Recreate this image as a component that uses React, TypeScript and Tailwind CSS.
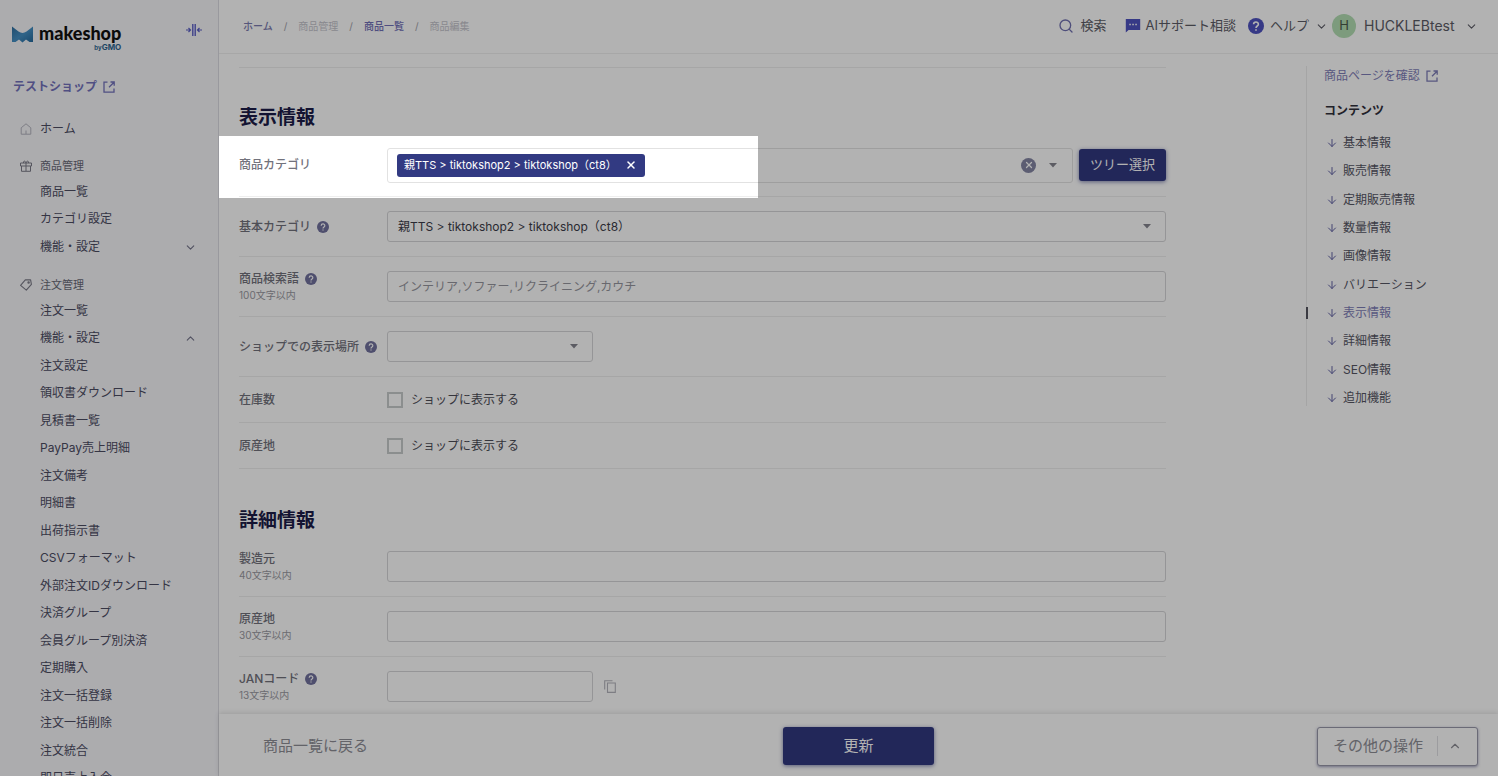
import { ReactNode } from "react";
import { ArrowDown, ChevronDown, ChevronUp, Search, X } from "lucide-react";

const orderMenu = [
  "注文一覧",
  "機能・設定",
  "注文設定",
  "領収書ダウンロード",
  "見積書一覧",
  "PayPay売上明細",
  "注文備考",
  "明細書",
  "出荷指示書",
  "CSVフォーマット",
  "外部注文IDダウンロード",
  "決済グループ",
  "会員グループ別決済",
  "定期購入",
  "注文一括登録",
  "注文一括削除",
  "注文統合",
  "即日売上入金",
];

const contents = [
  "基本情報",
  "販売情報",
  "定期販売情報",
  "数量情報",
  "画像情報",
  "バリエーション",
  "表示情報",
  "詳細情報",
  "SEO情報",
  "追加機能",
];

function LogoMark() {
  return (
    <svg viewBox="0 0 21 17" className="h-[17px] w-[21px]" aria-hidden="true">
      <defs>
        <linearGradient id="wing" x1="0" y1="0" x2="1" y2="1">
          <stop offset="0" stopColor="#2f6f9f" />
          <stop offset="0.5" stopColor="#4590c4" />
          <stop offset="1" stopColor="#24699c" />
        </linearGradient>
      </defs>
      <path d="M0 0.5 L6.5 5.6 Q10.5 8.2 14.5 5.6 L21 0.5 V16 H17.5 L14 13.4 L10.5 16.4 L7 13.4 L3.5 16 H0 Z" fill="url(#wing)" />
    </svg>
  );
}

function ExternalIcon() {
  return (
    <svg viewBox="0 0 12 12" className="size-3" fill="none" stroke="currentColor" strokeWidth="1.3" aria-hidden="true">
      <path d="M4.5 1.2H1V11.2H11V7.5M7.5 1H11.2V4.7M11 1.2L6 6.2" />
    </svg>
  );
}

function CollapseIcon() {
  return (
    <svg viewBox="0 0 16 12" className="h-3 w-4" aria-hidden="true">
      <path d="M6 0H7V12H6ZM9 0H10V12H9Z" fill="#6a6ec8" />
      <path d="M7 0H9V12H7Z" fill="#a9abe6" />
      <path d="M0 6H4.2M2.5 4L4.5 6L2.5 8M16 6H11.8M13.5 4L11.5 6L13.5 8" fill="none" stroke="#5a5fc4" strokeWidth="1.2" />
    </svg>
  );
}

function HomeIcon() {
  return (
    <svg viewBox="0 0 12 12" className="size-3" fill="none" stroke="#b4b4be" aria-hidden="true">
      <path d="M1.2 11.2V4.8L6 0.8L10.8 4.8V11.2ZM6 7.5V11" />
    </svg>
  );
}

function GiftIcon() {
  return (
    <svg viewBox="0 0 12 12" className="size-3" fill="none" stroke="#7c7c88" aria-hidden="true">
      <path d="M0.5 3H11.5V6H0.5ZM1.5 6V11.3H10.5V6M6 3V11M3.5 3C3 0.5 5.5 0.5 6 3C6.5 0.5 9 0.5 8.5 3" />
    </svg>
  );
}

function TagIcon() {
  return (
    <svg viewBox="0 0 12 12" className="size-3" fill="none" stroke="#7c7c88" strokeWidth="1.1" aria-hidden="true">
      <path d="M5.3 0.9L10.6 0.9L11.4 5.4L6.3 11.2L0.6 6.4Z" strokeLinejoin="round" />
      <circle cx="8.6" cy="3.4" r="0.7" />
    </svg>
  );
}

function CopyIcon() {
  return (
    <svg viewBox="0 0 12 13" className="h-[13px] w-3" fill="none" stroke="#b4b4bc" strokeWidth="1.1" aria-hidden="true">
      <path d="M3.5 3H11.3V12.4H3.5ZM0.7 9.5V0.7H8.5" />
    </svg>
  );
}

function ChatIcon() {
  return (
    <svg viewBox="0 0 16 14" className="h-[14px] w-4" aria-hidden="true">
      <path d="M1.2 0H15.2V11H3.6L0.8 13.6V0Z" fill="#4e52c0" />
      <path d="M4.3 5.5H5.8M7.3 5.5H8.8M10.3 5.5H11.8" stroke="#fff" strokeWidth="1.4" />
    </svg>
  );
}

function HelpIcon({ large }: { large?: boolean }) {
  return (
    <svg viewBox="0 0 16 16" className={large ? "size-4" : "size-3"} aria-hidden="true">
      <circle cx="8" cy="8" r="8" fill={large ? "#4e52c0" : "#72729e"} />
      <path
        d="M5.6 6.3C5.6 3.2 10.4 3.2 10.4 6.2C10.4 8 8 8 8 9.9M8 11.2V12.8"
        fill="none"
        stroke="#fff"
        strokeWidth="1.6"
      />
    </svg>
  );
}

function Caret() {
  return (
    <svg viewBox="0 0 8 5" className="h-[5px] w-2" aria-hidden="true">
      <path d="M0 0H8L4 4.6Z" fill="#85858e" />
    </svg>
  );
}

function MenuItem({ label, chevron }: { label: string; chevron?: ReactNode }) {
  return (
    <li className="flex items-center">
      <a href="#" className="flex flex-1 items-center justify-between pr-[21px] pl-10">
        {label}
        {chevron}
      </a>
    </li>
  );
}

function Sidebar() {
  return (
    <nav className="w-[219px] shrink-0 overflow-hidden border-r border-[#dcdce2] bg-[#f6f6fa] text-xs text-[#4c4c62]">
      <div className="flex h-[73px] items-start justify-between pt-6 pr-4 pl-3">
        <a href="#" className="flex items-start gap-[6px]" aria-label="makeshop by GMO">
          <span className="pt-[2px]">
            <LogoMark />
          </span>
          <span className="flex flex-col items-end">
            <span className="font-[Lato] text-lg leading-[18px] font-black text-[#111]">makeshop</span>
            <span className="mt-px flex items-baseline text-[8px] leading-2 font-bold text-[#2f6590]">
              <span className="text-[6px]">by</span>GMO
            </span>
          </span>
        </a>
        <button type="button" aria-label="メニューを閉じる">
          <CollapseIcon />
        </button>
      </div>
      <a href="#" className="flex h-7 items-center gap-[6px] pl-[13px] font-bold text-[#7372bc]">
        テストショップ
        <ExternalIcon />
      </a>
      <a href="#" className="mt-[14px] flex h-7 items-center gap-2 pl-5">
        <HomeIcon />
        ホーム
      </a>
      <h2 className="mt-[11px] flex h-6 items-center gap-2 pl-5 text-[11px] text-[#6a6a78]">
        <GiftIcon />
        商品管理
      </h2>
      <ul className="grid h-[83px] auto-rows-fr">
        <MenuItem label="商品一覧" />
        <MenuItem label="カテゴリ設定" />
        <MenuItem label="機能・設定" chevron={<ChevronDown size={13} className="text-[#74748a]" />} />
      </ul>
      <h2 className="mt-3 flex h-6 items-center gap-2 pl-5 text-[11px] text-[#6a6a78]">
        <TagIcon />
        注文管理
      </h2>
      <ul className="grid h-[495px] auto-rows-fr">
        {orderMenu.map((label, i) => (
          <MenuItem
            key={label}
            label={label}
            chevron={i === 1 ? <ChevronUp size={13} className="text-[#74748a]" /> : undefined}
          />
        ))}
      </ul>
    </nav>
  );
}

function Header() {
  return (
    <header className="flex h-[54px] shrink-0 items-center justify-between border-b border-[#efefef] pr-5 pb-px pl-6">
      <ol className="flex items-center gap-[11px] text-[10px] text-[#c4c4cc]">
        <li>
          <a href="#" className="font-medium text-[#7c7cb0]">ホーム</a>
        </li>
        <li className="text-[#a0a0a8]">/</li>
        <li>商品管理</li>
        <li className="text-[#a0a0a8]">/</li>
        <li>
          <a href="#" className="font-medium text-[#7270b8]">商品一覧</a>
        </li>
        <li className="text-[#a0a0a8]">/</li>
        <li>商品編集</li>
      </ol>
      <div className="flex items-center text-[13px] text-[#5c5c66]">
        <button type="button" className="mr-[18px] flex items-center gap-[7px]">
          <Search size={16} className="text-[#7070b0]" />
          検索
        </button>
        <button type="button" className="mr-3 flex items-center gap-[5px]">
          <ChatIcon />
          AIサポート相談
        </button>
        <button type="button" className="mr-1 flex items-center gap-[6px]">
          <HelpIcon large />
          ヘルプ
          <ChevronDown size={13} />
        </button>
        <button type="button" className="flex items-center">
          <span className="mr-2 grid size-6 place-items-center rounded-full bg-[#b4deb4] text-[#4b5a4b]">H</span>
          <span className="w-[95px] text-left text-sm">HUCKLEBtest</span>
          <ChevronDown size={13} className="ml-[6px]" />
        </button>
      </div>
    </header>
  );
}

interface FieldRowProps {
  id?: string;
  label: string;
  note?: string;
  help?: boolean;
  size?: string;
  children: ReactNode;
}

function FieldRow({ id, label, note, help, size = "min-h-[60px]", children }: FieldRowProps) {
  return (
    <div className={`flex items-center border-b border-[#eeeeee] ${size}`}>
      <div className="w-[148px] shrink-0">
        <div className="flex items-center gap-[6px] text-xs text-[#72727c]">
          <label htmlFor={id} className="font-medium">{label}</label>
          {help && <HelpIcon />}
        </div>
        {note && <p className="text-[10px] leading-4 text-[#9a9aa2]">{note}</p>}
      </div>
      {children}
    </div>
  );
}

const field = "h-[31px] rounded-[3px] border border-[#d6d6d8] bg-white px-[10px] text-xs placeholder:text-[#96969e]";

function SelectBox({ id, width, options }: { id: string; width: string; options: string[] }) {
  return (
    <div className={`relative ${width}`}>
      <select id={id} className={`w-full appearance-none text-[#3c3c48] ${field}`}>
        {options.map((option) => (
          <option key={option}>{option}</option>
        ))}
      </select>
      <span className="pointer-events-none absolute inset-y-0 right-[15px] flex items-center">
        <Caret />
      </span>
    </div>
  );
}

function ShopCheckbox({ id }: { id: string }) {
  return (
    <div className="flex items-center gap-2 text-xs text-[#4c4c56]">
      <input id={id} type="checkbox" className="size-4 appearance-none border-2 border-[#c8cccc] bg-white" />
      <label htmlFor={id}>ショップに表示する</label>
    </div>
  );
}

function EditForm() {
  return (
    <form className="mt-[13px] mr-[140px] min-w-0 flex-1 border-t border-[#eeeeee]">
      <h2 className="flex h-[66px] items-end pb-[3px] text-[19px] leading-[26px] font-bold text-[#1c1c48]">表示情報</h2>
      <FieldRow id="category" label="商品カテゴリ" size="min-h-[63px]">
        <div className="flex h-[35px] flex-1 items-center rounded-[3px] border border-[#e2e2e2] bg-white pr-[15px] pl-[9px]">
          <span className="flex h-[23px] items-center gap-2 rounded-[3px] bg-[#323a82] pr-2 pl-[7px] text-[11px] text-white">
            親TTS &gt; tiktokshop2 &gt; tiktokshop（ct8）
            <button type="button" aria-label="カテゴリを外す">
              <X size={12} strokeWidth={3} />
            </button>
          </span>
          <input id="category" className="min-w-0 flex-1 outline-none" />
          <button type="button" aria-label="すべて外す" className="mr-[13px] grid size-[15px] place-items-center rounded-full bg-[#8486a4] text-white">
            <X size={10} strokeWidth={3} />
          </button>
          <button type="button" aria-label="候補を開く">
            <Caret />
          </button>
        </div>
        <button type="button" className="ml-[6px] h-8 w-[87px] rounded-[3px] bg-[#313880] text-[13px] text-white shadow-[0_1px_4px_rgba(40,48,120,0.6)]">
          ツリー選択
        </button>
      </FieldRow>
      <FieldRow id="base" label="基本カテゴリ" help>
        <SelectBox id="base" width="flex-1" options={["親TTS > tiktokshop2 > tiktokshop（ct8）"]} />
      </FieldRow>
      <FieldRow id="words" label="商品検索語" note="100文字以内" help>
        <input id="words" className={`flex-1 ${field}`} placeholder="インテリア,ソファー,リクライニング,カウチ" />
      </FieldRow>
      <FieldRow id="place" label="ショップでの表示場所" help>
        <SelectBox id="place" width="w-[206px]" options={[""]} />
      </FieldRow>
      <FieldRow id="stock" label="在庫数" size="min-h-[46px]">
        <ShopCheckbox id="stock" />
      </FieldRow>
      <FieldRow id="origin-shown" label="原産地" size="min-h-[46px]">
        <ShopCheckbox id="origin-shown" />
      </FieldRow>

      <h2 className="flex h-[68px] items-end pb-[3px] text-[19px] leading-[26px] font-bold text-[#1c1c48]">詳細情報</h2>
      <FieldRow id="maker" label="製造元" note="40文字以内">
        <input id="maker" className={`flex-1 ${field}`} />
      </FieldRow>
      <FieldRow id="origin" label="原産地" note="30文字以内">
        <input id="origin" className={`flex-1 ${field}`} />
      </FieldRow>
      <FieldRow id="jan" label="JANコード" note="13文字以内" help>
        <input id="jan" className={`w-[206px] ${field}`} />
        <button type="button" aria-label="コピー" className="ml-[11px]">
          <CopyIcon />
        </button>
      </FieldRow>
    </form>
  );
}

function ContentsNav() {
  return (
    <aside className="w-[192px] shrink-0 pt-3 text-xs text-[#565664]">
      <div className="flex h-[340px] flex-col border-l border-[#ececec]">
        <a href="#" className="flex h-5 shrink-0 items-center gap-[6px] pl-[17px] text-[#7f7eb8]">
          商品ページを確認
          <ExternalIcon />
        </a>
        <h2 className="mt-[15px] h-5 shrink-0 pl-[17px] leading-5 font-bold text-[#30303c]">コンテンツ</h2>
        <ul className="mt-[8px] grid h-[283px] shrink-0 auto-rows-fr">
          {contents.map((label) => {
            const active = label === "表示情報";
            return (
              <li key={label} className="flex items-center">
                <span className={active ? "-ml-px h-3 w-[2px] bg-[#55555f]" : "-ml-px w-[2px]"} />
                <a href="#" className={`flex items-center gap-[5px] pl-[18px] ${active ? "text-[#7f7eb8]" : ""}`}>
                  <ArrowDown size={12} className="text-[#6262a4]" />
                  {label}
                </a>
              </li>
            );
          })}
        </ul>
      </div>
    </aside>
  );
}

function FooterBar() {
  return (
    <footer className="z-10 grid h-[62px] shrink-0 grid-cols-[1fr_auto_1fr] items-center bg-white px-5 pt-[2px] shadow-[0_-1px_5px_rgba(0,0,0,0.12)]">
      <a href="#" className="justify-self-start pl-6 text-[15px] text-[#8e8e96]">
        商品一覧に戻る
      </a>
      <button type="button" className="h-[38px] w-[151px] rounded-[3px] bg-[#313880] text-[15px] text-white shadow-[0_1px_4px_rgba(40,48,120,0.6)]">
        更新
      </button>
      <button type="button" className="flex h-[39px] items-center justify-self-end rounded-[3px] border border-[#9898aa] bg-white px-[15px] text-[15px] text-[#8e8e96] shadow-[0_1px_3px_rgba(60,60,120,0.5)]">
        その他の操作
        <span className="ml-[14px] h-5 border-l border-[#e0e0e4]" />
        <ChevronUp size={14} className="ml-[10px]" />
      </button>
    </footer>
  );
}

export default function App() {
  return (
    <div className="relative flex h-screen overflow-hidden bg-white font-[Inter,'Noto_Sans_CJK_JP',sans-serif]">
      <Sidebar />
      <div className="flex min-w-0 flex-1 flex-col">
        <Header />
        <main className="flex min-h-0 flex-1 overflow-hidden pl-5">
          <EditForm />
          <ContentsNav />
        </main>
        <FooterBar />
      </div>
      {/* guide spotlight: everything outside this box is dimmed */}
      <div className="pointer-events-none absolute top-[136px] left-[219px] z-20 h-[62px] w-[539px] shadow-[0_0_0_2000px_rgba(0,0,0,0.3)]" />
    </div>
  );
}
